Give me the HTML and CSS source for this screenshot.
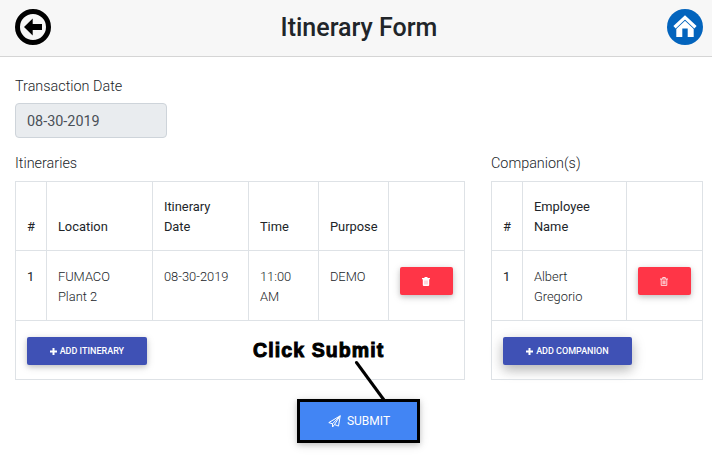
FILE: index.html
```html
<!DOCTYPE html>
<html lang="en">
<head>
<meta charset="utf-8">
<title>Itinerary Form</title>
<link rel="stylesheet" href="styles.css">
</head>
<body>
<header class="topbar">
  <a class="nav-icon" aria-label="Back"><svg width="36" height="36" viewBox="0 0 36 36"><circle cx="18" cy="18" r="15.500" fill="#f7f7f7" stroke="#000" stroke-width="5"/><path d="M9 18 17.700 9.500V15H27v6h-9.300v5.500z"/></svg></a>
  <h1>Itinerary Form</h1>
  <a class="nav-icon" aria-label="Home"><svg width="36" height="36" viewBox="0 0 36 36"><circle cx="18" cy="18" r="18" fill="#0364bd"/><path d="M9.300 18.500 18 10.500l8.700 8V28H20.700v-8.500h-5.400V28H9.300z" fill="#fff"/><path d="M7.500 18.200 18 8.400l10.500 9.800" fill="none" stroke="#0364bd" stroke-width="5"/><path d="M7.500 18.200 18 8.400l10.500 9.800" fill="none" stroke="#fff" stroke-width="3.300"/></svg></a>
</header>
<main>
  <div class="date-group">
    <label for="date">Transaction Date</label>
    <input id="date" type="text" value="08-30-2019" readonly>
  </div>
  <div class="tables">
    <section class="itineraries">
      <h2>Itineraries</h2>
      <table>
        <colgroup><col class="c-num"><col class="c-location"><col class="c-date"><col class="c-short"><col class="c-short"><col></colgroup>
        <thead><tr><th>#</th><th>Location</th><th>Itinerary Date</th><th>Time</th><th>Purpose</th><th></th></tr></thead>
        <tbody>
          <tr class="entry"><td class="num">1</td><td>FUMACO<br>Plant 2</td><td>08-30-2019</td><td>11:00 AM</td><td>DEMO</td><td class="action"><button class="btn delete" aria-label="Delete"><svg width="8" height="9" viewBox="0 0 8 9"><path d="M2.500 0h3v1H8v1.300H0V1h2.500zM.8 2.300h6.400V8q0 1-1 1H1.800q-1 0-1-1z" fill="#fff"/><path d="M2.800 3.500v4M4 3.500v4M5.200 3.500v4" stroke="#ff8b98" stroke-width=".5"/></svg></button></td></tr>
          <tr class="add-row"><td colspan="6"><button class="btn add"><svg width="7" height="7" viewBox="0 0 7 7"><path d="M2.500 0h2v2.500H7v2H4.500V7h-2V4.500H0v-2h2.500z" fill="#fff"/></svg>ADD ITINERARY</button></td></tr>
        </tbody>
      </table>
    </section>
    <section class="companions">
      <h2>Companion(s)</h2>
      <table>
        <colgroup><col class="c-num"><col class="c-name"><col></colgroup>
        <thead><tr><th>#</th><th>Employee Name</th><th></th></tr></thead>
        <tbody>
          <tr class="entry"><td class="num">1</td><td>Albert Gregorio</td><td class="action"><button class="btn delete" aria-label="Delete"><svg width="8" height="9" viewBox="0 0 8 9"><path d="M0 2h8M2.700 1.800V.5h2.600v1.300M1.200 2v6.400h5.600V2M3 3.500v3.700M4 3.500v3.700M5 3.500v3.700" fill="none" stroke="#fff" stroke-width=".8"/></svg></button></td></tr>
          <tr class="add-row"><td colspan="3"><button class="btn add wide"><svg width="7" height="7" viewBox="0 0 7 7"><path d="M2.500 0h2v2.500H7v2H4.500V7h-2V4.500H0v-2h2.500z" fill="#fff"/></svg>ADD COMPANION</button></td></tr>
        </tbody>
      </table>
    </section>
  </div>
  <div class="submit-row">
    <button class="submit"><svg width="13" height="13" viewBox="0 0 13 13"><path d="M.8 7.600 12.200.8l-1.700 10.300-4-1.600-1.900 2.500-.1-3.200zM4.500 8.800l7.700-8-5.700 8.700" fill="none" stroke="#fff" stroke-linejoin="round"/></svg>SUBMIT</button>
    <div class="callout">
      <span>Click Submit</span>
      <svg width="34" height="42" viewBox="0 0 34 42"><path d="M2.500 2.500 30 40" stroke="#000" stroke-width="3" stroke-linecap="round"/></svg>
    </div>
  </div>
</main>
</body>
</html>
```
FILE: styles.css
```css
* { box-sizing: border-box; }
body {
  margin: 0;
  height: 455px;
  overflow: hidden;
  background: #fff;
  color: #212529;
  font-family: Roboto, sans-serif;
  font-size: 12.9px;
  font-weight: 300;
  line-height: 20px;
}
.topbar {
  display: flex;
  align-items: center;
  justify-content: space-between;
  height: 57px;
  padding: 0 9px 2px 15px;
  background: #f7f7f7;
  border-bottom: 1px solid #d5d5d5;
}
.nav-icon, .nav-icon svg { display: block; }
h1 {
  margin: 0;
  padding-top: 2px;
  font-size: 25px;
  font-weight: 500;
  line-height: 30px;
}
main { padding: 19px 9px 0 15px; }
.date-group { display: flex; flex-direction: column; }
.date-group label, h2 {
  margin: 0;
  font-size: 14.4px;
  font-weight: 300;
  line-height: 22px;
}
.date-group input {
  width: 152px;
  height: 35px;
  margin-top: 5px;
  padding: 2px 11px 0;
  border: 1px solid #ced4da;
  border-radius: 4px;
  background: #e9ecef;
  color: #495057;
  font: 400 14.4px Roboto, sans-serif;
}
.tables {
  display: flex;
  justify-content: space-between;
  margin-top: 15px;
}
.itineraries { width: 450px; }
.companions { width: 212px; }
h2 { margin-bottom: 6px; }
table {
  width: 100%;
  table-layout: fixed;
  border-collapse: collapse;
}
.c-num { width: 31px; }
.c-location { width: 106px; }
.c-date { width: 96px; }
.c-short { width: 70px; }
.c-name { width: 104px; }
th, td {
  padding: 0 10.900px;
  border: 1px solid #dee2e6;
  text-align: left;
}
th {
  height: 69px;
  padding-bottom: 13px;
  font-weight: 400;
  vertical-align: bottom;
}
.entry td {
  height: 70px;
  padding-top: 16px;
  vertical-align: top;
}
.entry .num { font-weight: 400; }
.add-row td {
  height: 59px;
  padding-top: 16px;
  vertical-align: top;
}
.btn {
  display: flex;
  align-items: center;
  justify-content: center;
  gap: 3px;
  height: 28px;
  padding: 0;
  border: 0;
  border-radius: 2px;
  color: #fff;
  font: 500 9px Roboto, sans-serif;
  box-shadow: 0 2px 5px rgba(0, 0, 0, .16), 0 2px 10px rgba(0, 0, 0, .12);
}
.delete { width: 53px; background: #ff3547; }
.add { width: 120px; background: #3f51b5; }
.wide {
  width: 129px;
  box-shadow: 0 5px 11px rgba(0, 0, 0, .18), 0 4px 15px rgba(0, 0, 0, .15);
}
.submit-row {
  position: relative;
  width: 123px;
  margin: 19px 0 0 282px;
}
.submit {
  display: flex;
  align-items: center;
  justify-content: center;
  gap: 6px;
  width: 123px;
  height: 44px;
  padding: 0 0 0 1px;
  border: 3px solid #000;
  background: #4285f4;
  color: #fff;
  font: 400 12px Roboto, sans-serif;
  box-shadow: 0 2px 5px rgba(0, 0, 0, .16), 0 2px 10px rgba(0, 0, 0, .12);
}
.callout {
  position: absolute;
  top: -60px;
  left: -44px;
  color: #000;
  font: 900 19.500px/22px "Liberation Sans", sans-serif;
  white-space: nowrap;
}
.callout span {
  display: block;
  -webkit-text-stroke: 1px #000;
  letter-spacing: 1.1px;
}
.callout svg {
  display: block;
  margin: -1px 0 0 101px;
}
```
